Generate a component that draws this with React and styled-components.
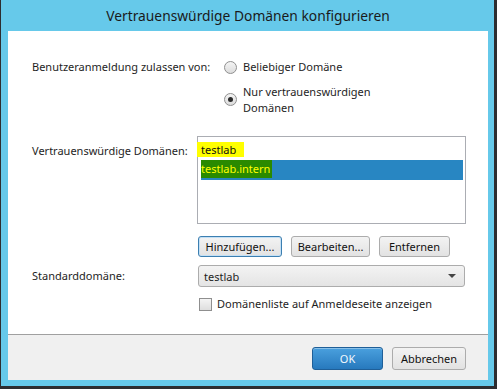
import React from "react";
import styled, { createGlobalStyle } from "styled-components";

const GlobalStyle = createGlobalStyle`
  body {
    margin: 0;
    font-family: "Noto Sans", "Open Sans", sans-serif;
    font-size: 11px;
    color: #1e1e1e;
  }
`;

const Window = styled.div`
  box-sizing: border-box;
  width: 497px;
  height: 389px;
  background: #66c9ea;
  border-left: 1px solid #2d2d30;
  border-right: 3px solid #2d2d30;
  border-bottom: 3px solid #2d2d30;
  padding: 0 6px 6px 7px;
  display: flex;
  flex-direction: column;
`;

const TitleBar = styled.div`
  height: 31px;
  line-height: 32px;
  text-align: center;
  font-size: 13.8px;
  color: #1a1a1a;
`;

const Body = styled.div`
  flex: 1;
  background: #fff;
  padding: 28px 0 0 24px;
  display: grid;
  grid-template-columns: 165px 269px;
  align-content: start;
`;

const Label = styled.div`
  white-space: nowrap;
  line-height: 16px;
  margin-top: ${(p) => p.$top || 0}px;
  align-self: ${(p) => (p.$center ? "center" : "start")};
`;

const Column = styled.div`
  display: flex;
  flex-direction: column;
  margin-top: ${(p) => p.$top || 0}px;
`;

const RadioGroup = styled.div`
  display: flex;
  flex-direction: column;
  gap: 9px;
  padding-left: 27px;
`;

const Option = styled.label`
  display: flex;
  align-items: center;
  gap: 6px;
  line-height: 16px;
`;

const RadioDot = styled.span`
  box-sizing: border-box;
  flex: none;
  width: 13px;
  height: 13px;
  border-radius: 50%;
  border: 1px solid #8f8f8f;
  background: linear-gradient(#f4f4f4, #dcdcdc);
  display: flex;
  align-items: center;
  justify-content: center;
  margin-top: ${(p) => (p.$checked ? -2 : 0)}px;

  &::after {
    content: "";
    width: 5px;
    height: 5px;
    border-radius: 50%;
    background: #2b2b2b;
    display: ${(p) => (p.$checked ? "block" : "none")};
  }
`;

const OptionText = styled.span`
  width: 135px;
`;

const ListBox = styled.div`
  box-sizing: border-box;
  height: 88px;
  border: 1px solid #abadb3;
  padding: 3px 2px 0 3px;
  display: flex;
  flex-direction: column;
`;

const ListItem = styled.div`
  height: 20px;
  line-height: 20px;
  background: ${(p) => (p.$selected ? "#2886c2" : "transparent")};
`;

const Marker = styled.span`
  display: inline-block;
  height: ${(p) => p.$h}px;
  line-height: ${(p) => p.$h}px;
  background: ${(p) => p.$bg};
  color: ${(p) => p.$fg};
  margin-left: ${(p) => p.$ml || 0}px;
  padding: 0 ${(p) => p.$pr || 0}px 0 ${(p) => p.$pl || 0}px;
  vertical-align: top;
  margin-top: ${(p) => p.$mt || 0}px;
`;

const ButtonRow = styled.div`
  display: flex;
  gap: 9px;
  margin: 12px 0 0 1px;
`;

const Button = styled.button`
  box-sizing: border-box;
  width: ${(p) => p.$w}px;
  height: ${(p) => p.$h || 21}px;
  padding: 0;
  font-family: inherit;
  font-size: 11px;
  color: #111;
  border-radius: 3px;
  border: 1px solid ${(p) => (p.$focus ? "#3c7fb1" : "#acacac")};
  background: linear-gradient(#f3f3f3, #e2e2e2);
  box-shadow: ${(p) => (p.$focus ? "inset 0 0 0 1px #c4e0f5" : "none")};
`;

const PrimaryButton = styled(Button)`
  color: #f2f8fd;
  border-color: #1f5f98;
  background: linear-gradient(#4aa0de, #2779bd);
  box-shadow: inset 0 1px 0 rgba(255, 255, 255, 0.35);
`;

const Select = styled.div`
  box-sizing: border-box;
  width: 267px;
  height: 22px;
  margin-left: 1px;
  border: 1px solid #acacac;
  border-radius: 3px;
  background: linear-gradient(#f3f3f3, #e4e4e4);
  display: flex;
  align-items: center;
  justify-content: space-between;
  padding: 0 8px 0 5px;
`;

const Arrow = styled.span`
  width: 0;
  height: 0;
  border-left: 4px solid transparent;
  border-right: 4px solid transparent;
  border-top: 4px solid #444;
`;

const CheckRow = styled.label`
  display: flex;
  align-items: center;
  gap: 5px;
  line-height: 16px;
  margin: 9px 0 0 2px;
`;

const CheckBox = styled.span`
  box-sizing: border-box;
  width: 13px;
  height: 13px;
  border: 1px solid #8f8f8f;
  background: linear-gradient(#f4f4f4, #dedede);
`;

const Footer = styled.div`
  height: 46px;
  border-top: 1px solid #a0a0a0;
  background: #f0f0f0;
  display: flex;
  justify-content: flex-end;
  gap: 9px;
  padding: 12px 22px 0 0;
  box-sizing: border-box;
`;

export default function App() {
  return (
    <>
      <GlobalStyle />
      <Window>
        <TitleBar>Vertrauenswürdige Domänen konfigurieren</TitleBar>
        <Body>
          <Label>Benutzeranmeldung zulassen von:</Label>
          <RadioGroup>
            <Option>
              <RadioDot />
              <span>Beliebiger Domäne</span>
            </Option>
            <Option>
              <RadioDot $checked />
              <OptionText>Nur vertrauenswürdigen Domänen</OptionText>
            </Option>
          </RadioGroup>

          <Label $top={27}>Vertrauenswürdige Domänen:</Label>
          <Column $top={20}>
            <ListBox>
              <ListItem>
                <Marker $h={15} $mt={2} $bg="#ffff00" $fg="#111" $ml={-4} $pl={4} $pr={8}>
                  testlab
                </Marker>
              </ListItem>
              <ListItem $selected>
                <Marker $h={18} $bg="#2a8a00" $fg="#ffff00" $pr={2}>
                  testlab.intern
                </Marker>
              </ListItem>
            </ListBox>
            <ButtonRow>
              <Button $w={84} $focus>Hinzufügen...</Button>
              <Button $w={79}>Bearbeiten...</Button>
              <Button $w={71}>Entfernen</Button>
            </ButtonRow>
          </Column>

          <Label $center $top={8}>Standarddomäne:</Label>
          <Column $top={8}>
            <Select>
              <span>testlab</span>
              <Arrow />
            </Select>
          </Column>

          <div />
          <CheckRow>
            <CheckBox />
            <span>Domänenliste auf Anmeldeseite anzeigen</span>
          </CheckRow>
        </Body>
        <Footer>
          <PrimaryButton $w={71} $h={23}>OK</PrimaryButton>
          <Button $w={74} $h={23}>Abbrechen</Button>
        </Footer>
      </Window>
    </>
  );
}
